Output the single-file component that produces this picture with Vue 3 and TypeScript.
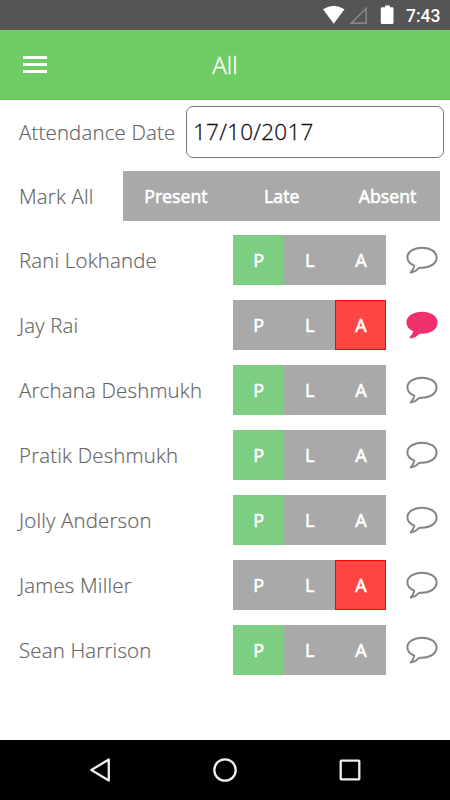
<script setup lang="ts">
import { ref } from 'vue'

type Mark = 'P' | 'L' | 'A'

interface Student {
  name: string
  mark: Mark
  noted: boolean
}

const marks: Mark[] = ['P', 'L', 'A']
const bulk = ['Present', 'Late', 'Absent']
const date = ref('17/10/2017')

const students = ref<Student[]>([
  { name: 'Rani Lokhande', mark: 'P', noted: false },
  { name: 'Jay Rai', mark: 'A', noted: true },
  { name: 'Archana Deshmukh', mark: 'P', noted: false },
  { name: 'Pratik Deshmukh', mark: 'P', noted: false },
  { name: 'Jolly Anderson', mark: 'P', noted: false },
  { name: 'James Miller', mark: 'A', noted: false },
  { name: 'Sean Harrison', mark: 'P', noted: false },
])

function markAll(label: string) {
  students.value.forEach((s) => (s.mark = label[0] as Mark))
}
</script>

<template>
  <div class="screen">
    <div class="status">
      <svg class="signals" width="78" height="30" viewBox="0 0 78 30">
        <path d="M3 9.3Q13.7 2 24.5 9.3L13.7 23.8Z" fill="#fff" />
        <path d="M31.3 23.2H46.2V8.2Z" fill="none" stroke="#858585" stroke-width="1.7" />
        <path d="M62 7.3h3V5.4h5v1.9h2.3q1.2 0 1.2 1.2v14.3q0 1.2-1.2 1.2h-10.3q-1.2 0-1.2-1.2V8.5q0-1.2 1.2-1.2Z" fill="#fff" />
      </svg>
      <span class="clock">7:43</span>
    </div>

    <header class="bar">
      <button class="menu" aria-label="Menu"><i></i><i></i><i></i></button>
      <h1>All</h1>
    </header>

    <main>
      <div class="date-row">
        <label class="label date-label" for="date">Attendance Date</label>
        <input id="date" v-model="date" class="date" type="text" />
      </div>

      <div class="mark-row">
        <span class="label mark-label">Mark All</span>
        <div class="bulk">
          <button v-for="b in bulk" :key="b" @click="markAll(b)">{{ b }}</button>
        </div>
      </div>

      <div v-for="s in students" :key="s.name" class="student">
        <span class="label name">{{ s.name }}</span>
        <div class="marks">
          <button
            v-for="m in marks"
            :key="m"
            :class="{ present: m === 'P' && s.mark === m, late: m === 'L' && s.mark === m, absent: m === 'A' && s.mark === m }"
            @click="s.mark = m"
          >{{ m }}</button>
        </div>
        <svg class="bubble" :class="{ noted: s.noted }" width="34" height="30" viewBox="0 0 34 30">
          <path d="M17 2.7C8.8 2.7 2.4 6.8 2.4 12.3c0 3.6 2.3 6.5 6.9 8.3-.4 2.600-1.900 5.100-3.600 6.900 3.100-.3 5.200-1.400 6.700-3.200.9-1.100 1.800-1.800 3.400-1.600h1.200c8.200 0 14.600-4.200 14.600-10.100S25.200 2.700 17 2.700Z" />
        </svg>
      </div>
    </main>

    <nav class="nav">
      <svg width="30" height="30" viewBox="0 0 30 30"><path d="M6.3 15 23.8 4.5v21Z" /></svg>
      <svg width="30" height="30" viewBox="0 0 30 30"><circle cx="15" cy="15" r="10.7" /></svg>
      <svg width="30" height="30" viewBox="0 0 30 30"><rect x="5.7" y="5.7" width="18.6" height="18.6" rx=".5" /></svg>
    </nav>
  </div>
</template>

<style>
body {
  margin: 0;
  background: #fff;
}
</style>

<style scoped>
.screen {
  width: 450px;
  height: 800px;
  display: flex;
  flex-direction: column;
  overflow: hidden;
  background: #fff;
  font-family: "Open Sans", "Noto Sans", sans-serif;
}
button {
  border: 0;
  padding: 0;
  background: none;
  color: #fff;
  font: inherit;
}
.status {
  height: 30px;
  flex: none;
  display: flex;
  align-items: center;
  background: #555;
  padding-left: 320px;
}
.signals {
  flex: none;
}
.clock {
  margin-left: 8px;
  color: #fff;
  font: 500 17.5px/30px Roboto, sans-serif;
  padding-top: 2px;
}
.bar {
  height: 70px;
  flex: none;
  display: grid;
  grid-template-columns: 70px 1fr 70px;
  align-items: center;
  box-sizing: border-box;
  background: #6fcb64;
  border-bottom: 1px solid #63c158;
}
.menu {
  width: 24px;
  margin-left: 23px;
  display: grid;
  gap: 4px;
}
.menu i {
  height: 3px;
  background: #fff;
}
h1 {
  margin: 0;
  text-align: center;
  color: #fff;
  font-size: 24px;
  font-weight: 300;
  -webkit-text-stroke: 0.35px #fff;
}
main {
  flex: 1;
  padding-top: 6px;
}
.label {
  flex: none;
  color: #666;
  font-size: 20.4px;
  font-weight: 300;
  letter-spacing: 0.2px;
  -webkit-text-stroke: 0.2px #666;
  white-space: nowrap;
}
.date-row,
.mark-row,
.student {
  display: flex;
  align-items: center;
  padding-left: 19px;
}
.date-row {
  height: 52px;
}
.date-label {
  width: 167px;
}
.date {
  width: 258px;
  height: 52px;
  box-sizing: border-box;
  padding: 0 6px 1px;
  border: 1px solid #777;
  border-radius: 7px;
  background: #fff;
  color: #111;
  font: 300 22.5px "Open Sans", sans-serif;
  letter-spacing: 0.25px;
  -webkit-text-stroke: 0.3px #111;
}
.mark-row {
  height: 50px;
  margin-top: 12.5px;
}
.mark-label {
  width: 103.5px;
}
.bulk,
.marks {
  display: grid;
  grid-template-columns: repeat(3, 1fr);
  height: 50px;
  background: #a9a9a9;
  font-weight: 400;
  -webkit-text-stroke: 0.6px #fff;
}
.bulk {
  width: 317.5px;
  font-size: 17.7px;
}
.bulk button {
  padding-left: 1px;
}
.student {
  height: 50px;
  margin-top: 15px;
}
.mark-row + .student {
  margin-top: 14.5px;
}
.name {
  width: 213.5px;
}
.marks {
  width: 153.5px;
  font-size: 18px;
}
.marks button {
  padding-left: 1px;
}
.present {
  background: #7dce82;
}
.late {
  background: #f5a623;
}
.marks .absent {
  background: #ff4444;
  border: 1px solid #f00;
}
.bubble {
  margin-left: 19px;
  fill: none;
  stroke: #858585;
  stroke-width: 2;
  stroke-linejoin: round;
}
.bubble.noted {
  fill: #f0306a;
  stroke: #f0306a;
}
.nav {
  height: 60px;
  flex: none;
  display: flex;
  justify-content: center;
  align-items: center;
  gap: 95px;
  background: #000;
}
.nav svg {
  fill: none;
  stroke: #eee;
  stroke-width: 2.3;
  stroke-linejoin: round;
}
</style>
